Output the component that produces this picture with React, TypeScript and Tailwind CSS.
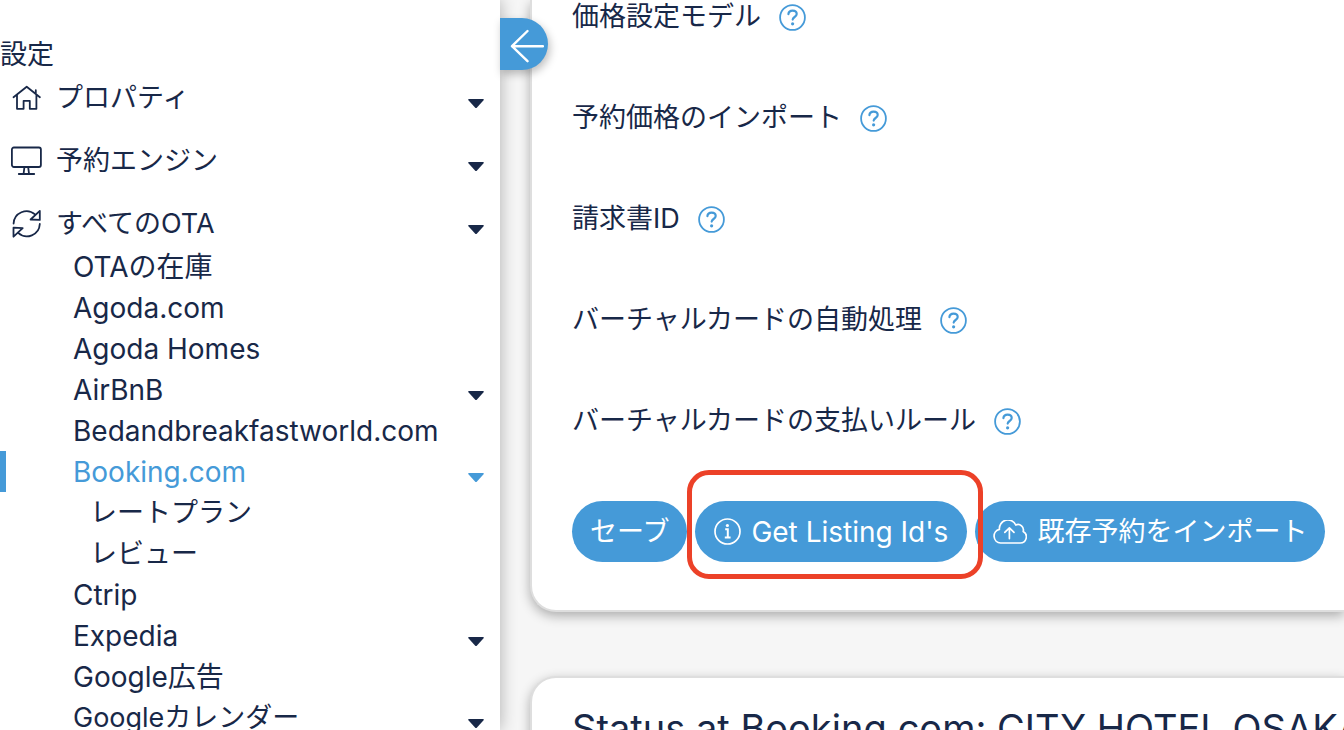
import type { ReactNode } from 'react'

type SubItem = { label: string; large?: boolean; caret?: boolean; active?: boolean; nested?: boolean }

const OTA_ITEMS: SubItem[] = [
  { label: 'OTAの在庫', large: true },
  { label: 'Agoda.com', large: true },
  { label: 'Agoda Homes', large: true },
  { label: 'AirBnB', large: true, caret: true },
  { label: 'Bedandbreakfastworld.com', large: true },
  { label: 'Booking.com', large: true, caret: true, active: true },
  { label: 'レートプラン', nested: true },
  { label: 'レビュー', nested: true },
  { label: 'Ctrip', large: true },
  { label: 'Expedia', large: true, caret: true },
  { label: 'Google広告', large: true },
  { label: 'Googleカレンダー', caret: true },
]

const SETTINGS = [
  '価格設定モデル',
  '予約価格のインポート',
  '請求書ID',
  'バーチャルカードの自動処理',
  'バーチャルカードの支払いルール',
]

const pill = 'inline-flex h-[61px] items-center whitespace-nowrap rounded-full bg-[#459ad8] text-white'

function HomeIcon() {
  return (
    <svg viewBox="0 0 32 32" className="h-8 w-8 shrink-0" fill="none" stroke="currentColor" strokeWidth="1.8" strokeLinecap="round" strokeLinejoin="round">
      <path d="M3.5 15.2 16.7 4.8 29.9 15.2M25.8 11.6V8.2M7 13v13.8h6.6v-8h6.2v8h6.6V13" />
    </svg>
  )
}

function MonitorIcon() {
  return (
    <svg viewBox="0 0 32 32" className="h-8 w-8 shrink-0" fill="none" stroke="currentColor" strokeWidth="1.8" strokeLinecap="round" strokeLinejoin="round">
      <rect x="1.9" y="2.5" width="29" height="19.5" rx="2" />
      <path d="M14.4 22.3 13.6 28.5M18.2 22.3 19 28.5M8.8 29h15.4" />
    </svg>
  )
}

function SyncIcon() {
  return (
    <svg viewBox="0 0 32 32" className="h-8 w-8 shrink-0" fill="none" stroke="currentColor" strokeWidth="1.8" strokeLinecap="round" strokeLinejoin="round">
      <path d="M3.6 15.5A12.9 12.9 0 0 1 25 6.4M29.8 16A12.9 12.9 0 0 1 8.2 24.9" />
      <path d="M29.8 2.9v9l-9.2-.4zM3.5 28.7v-9l9.2.5z" />
    </svg>
  )
}

function HelpIcon() {
  return (
    <svg viewBox="0 0 27 27" className="h-[27px] w-[27px]" fill="none" stroke="currentColor" strokeLinecap="round">
      <circle cx="13.5" cy="13.5" r="12.4" strokeWidth="1.8" />
      <path d="M9.4 10.2c.2-2.3 1.8-3.6 4.2-3.6 2.5 0 4.1 1.4 4.1 3.4 0 3-4 3-4 5.6" strokeWidth="2.2" />
      <circle cx="13.6" cy="19.8" r="1.6" fill="currentColor" stroke="none" />
    </svg>
  )
}

function InfoIcon() {
  return (
    <svg viewBox="0 0 27 27" className="h-[27px] w-[27px]" fill="none" stroke="currentColor" strokeWidth="1.7">
      <circle cx="13.5" cy="13.5" r="12.5" />
      <path d="M11.2 11.3h2.6v8.2M10.8 19.6h5.8" strokeWidth="2" />
      <circle cx="13.4" cy="7.5" r="1.6" fill="currentColor" stroke="none" />
    </svg>
  )
}

function CloudUploadIcon() {
  return (
    <svg viewBox="0 0 34 24" className="h-6 w-[34px]" fill="none" stroke="currentColor" strokeWidth="1.7" strokeLinecap="round" strokeLinejoin="round">
      <path d="M7.6 23H27.2A6.2 6.2 0 0 0 30.2 11.4 5.4 5.4 0 0 0 22.8 5 8.6 8.6 0 0 0 6.4 9.4 6.9 6.9 0 0 0 7.6 23Z" />
      <path d="M16.4 18.6V8M11.8 12.4 16.4 7.8 21 12.4" />
    </svg>
  )
}

function Caret({ label }: { label: string }) {
  return (
    <button type="button" aria-label={`${label} menu`} className="ml-auto mr-4 mt-[11px] shrink-0">
      <svg viewBox="0 0 16 9" className="h-[9px] w-4" fill="currentColor">
        <path d="M1 0h14q1 0 .8 1L9 8.4q-1 1-2 0L.2 1Q0 0 1 0z" />
      </svg>
    </button>
  )
}

function MenuRow({ icon, label }: { icon: ReactNode; label: string }) {
  return (
    <div className="flex h-[41px] items-center pl-2.5">
      <a href="#" className="flex items-center gap-3.5">
        {icon}
        {label}
      </a>
      <Caret label={label} />
    </div>
  )
}

function Sidebar() {
  return (
    <aside className="relative z-10 w-[500px] shrink-0 bg-white pt-[34px] shadow-[0_0_16px_rgba(0,0,0,0.3)]">
      <h2 className="flex h-[41px] items-center">設定</h2>
      <nav className="mt-[2px]">
        <div className="flex flex-col gap-[22px]">
          <MenuRow icon={<HomeIcon />} label="プロパティ" />
          <MenuRow icon={<MonitorIcon />} label="予約エンジン" />
          <MenuRow icon={<SyncIcon />} label="すべてのOTA" />
        </div>
        <ul className="mt-[2px]">
          {OTA_ITEMS.map((item) => (
            <li
              key={item.label}
              className={`flex h-[41px] items-center border-l-6 ${
                item.active ? 'border-[#459ad8] text-[#459ad8]' : 'border-transparent'
              } ${item.nested ? 'pl-[84px]' : 'pl-[67px]'}`}
            >
              <a href="#" className={item.large ? 'text-[28px]' : ''}>
                {item.label}
              </a>
              {item.caret && <Caret label={item.label} />}
            </li>
          ))}
        </ul>
      </nav>
      <button
        type="button"
        aria-label="Collapse menu"
        className="absolute left-full top-[18px] flex h-[52px] w-12 items-center justify-end rounded-r-full bg-[#459ad8] pr-1 text-white shadow-[2px_4px_8px_rgba(0,0,0,0.25)]"
      >
        <svg viewBox="0 0 34 34" className="mt-1 h-[34px] w-[34px]" fill="none" stroke="currentColor" strokeWidth="2.4" strokeLinecap="round" strokeLinejoin="round">
          <path d="M17.5 2 2 17.2l15.5 15M2 17.2h31" />
        </svg>
      </button>
    </aside>
  )
}

export default function App() {
  return (
    <div className="flex h-screen overflow-hidden bg-[#f6f6f6] font-['Inter','Noto_Sans_CJK_JP',sans-serif] text-[27px] leading-[34px] text-[#182848]">
      <Sidebar />
      <main className="min-w-0 flex-1 pl-[30px]">
        <section className="rounded-bl-[26px] border-b-2 border-l-2 border-[#dedede] bg-white pb-12 pl-10 shadow-[0_4px_12px_rgba(0,0,0,0.3)]">
          <div className="flex flex-col gap-[67px]">
            {SETTINGS.map((label) => (
              <div key={label} className="flex h-[34px] items-center gap-[18px]">
                <span>{label}</span>
                <button type="button" aria-label={`${label} help`} className="text-[#459ad8]">
                  <HelpIcon />
                </button>
              </div>
            ))}
          </div>
          <div className="mt-[63px] flex gap-2">
            <button type="button" className={`${pill} px-[18px]`}>
              セーブ
            </button>
            <div className="relative">
              <button type="button" className={`${pill} gap-2.5 px-[19px] text-[28px]`}>
                <InfoIcon />
                Get Listing Id's
              </button>
              <div className="pointer-events-none absolute -bottom-[17px] -left-2 -right-4 -top-[31px] z-10 rounded-[22px] border-5 border-[#ec4128]" />
            </div>
            <button type="button" className={`${pill} gap-2.5 px-[18px]`}>
              <CloudUploadIcon />
              既存予約をインポート
            </button>
          </div>
        </section>

        <section className="mt-16 rounded-tl-[26px] border-l-2 border-t-2 border-[#dedede] bg-white pb-12 pl-10 pt-[26px] shadow-[0_4px_12px_rgba(0,0,0,0.3)]">
          <h2 className="whitespace-nowrap text-[38px] leading-[48px]">Status at Booking.com: CITY HOTEL OSAKA</h2>
        </section>
      </main>
    </div>
  )
}
